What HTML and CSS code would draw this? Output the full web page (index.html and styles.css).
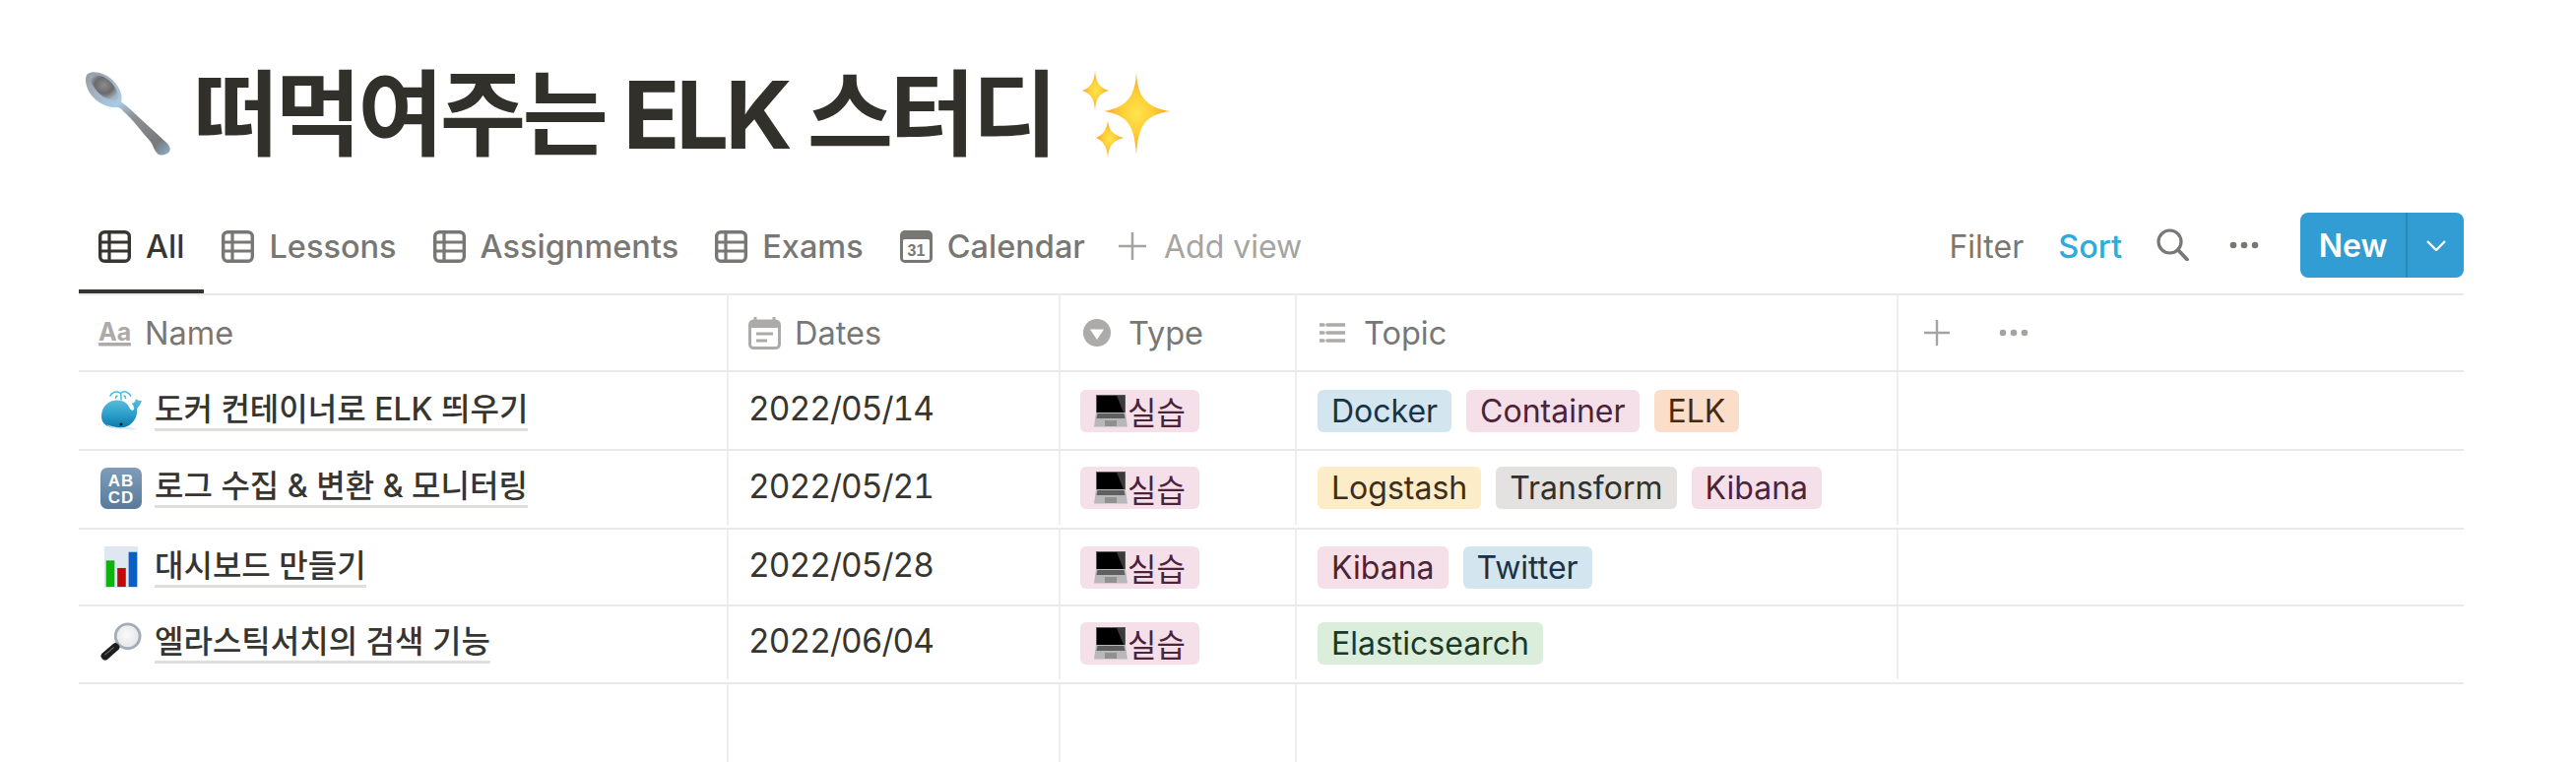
FILE: index.html
```html
<!DOCTYPE html>
<html lang="ko">
<head>
<meta charset="utf-8">
<title>떠먹여주는 ELK 스터디</title>
<link rel="stylesheet" href="styles.css">
</head>
<body>
<svg class="defs" width="0" height="0" aria-hidden="true">
  <defs>
    <linearGradient id="gSpoon" x1="0" y1="0" x2="1" y2="1">
      <stop offset="0" stop-color="#9a9a9c"/><stop offset=".38" stop-color="#a9cbe6"/><stop offset=".55" stop-color="#8e9094"/><stop offset=".85" stop-color="#77797d"/><stop offset="1" stop-color="#8fb3d2"/>
    </linearGradient>
    <radialGradient id="gBowl" cx=".5" cy=".42" r=".6">
      <stop offset="0" stop-color="#8c8c8e"/><stop offset=".55" stop-color="#6a6a6d"/><stop offset="1" stop-color="#a8b6c4"/>
    </radialGradient>
    <radialGradient id="gStar" cx=".5" cy=".5" r=".5">
      <stop offset="0" stop-color="#ffe44f"/><stop offset=".45" stop-color="#ffcf36"/><stop offset="1" stop-color="#ff9f2a"/>
    </radialGradient>
    <linearGradient id="gWhale" x1="0" y1="0" x2="0" y2="1">
      <stop offset="0" stop-color="#5cc0da"/><stop offset=".55" stop-color="#2b9dc8"/><stop offset="1" stop-color="#0a79ad"/>
    </linearGradient>
    <linearGradient id="gAbcd" x1="0" y1="0" x2="0" y2="1">
      <stop offset="0" stop-color="#7f9dba"/><stop offset="1" stop-color="#587a9a"/>
    </linearGradient>
    <radialGradient id="gLens" cx=".45" cy=".45" r=".6">
      <stop offset="0" stop-color="#fafafa"/><stop offset="1" stop-color="#e4e4e4"/>
    </radialGradient>
    <symbol id="i-table" viewBox="0 0 33 33">
      <rect x="1.700" y="1.700" width="29.600" height="29.600" rx="4.500" fill="none" stroke="currentColor" stroke-width="3.400"/>
      <path d="M1.500 12h30M1.500 21h30M11 1.500v30" fill="none" stroke="currentColor" stroke-width="3.200"/>
    </symbol>
    <symbol id="i-spoon" viewBox="0 0 90 90">
      <path d="M4 4C10 0 22 3 30 11c7 7 10 16 8 21 1 2 4 3 6 5 13 12 26 24 38 35 5 4 7 8 5 11-3 4-10 5-13 1-3-3-3-7-6-11C58 62 50 50 40 42c-2-3-4-4-6-4-8 1-20-4-26-12C2 18 0 8 4 4z" fill="url(#gSpoon)"/>
      <path d="M7 6c6-3 16 1 22 8 5 6 7 12 5 16-5 2-14-1-20-8C9 16 5 10 7 6z" fill="url(#gBowl)"/>
    </symbol>
    <symbol id="i-spark" viewBox="0 0 92 88">
      <path d="M57 1c1 24 9 36 34 40-25 4-32 14-34 44-2-30-9-40-33-44 24-4 32-16 33-40z" fill="url(#gStar)"/>
      <path d="M15 0c.8 11 4 17 14 20-10 3-13 8-14 20-1-12-4-17-13-20 9-3 12-9 13-20z" fill="url(#gStar)"/>
      <path d="M28 50c.8 10 5 15 16 18-11 3-15 8-16 20-1-12-5-17-12-20 7-3 11-8 12-18z" fill="url(#gStar)"/>
    </symbol>
    <symbol id="i-whale" viewBox="0 0 42 42">
      <path d="M21 10c0-3 0-5-.5-6.500M20.500 3.500C18.500 1.500 15 1.500 13 3M20.500 3.500c2-2 5-2 7-.5M13 3c-1.500.5-2.500 1.500-3 3M27.500 3c1.500.5 2.500 1.500 3 3M17 6c-1 .5-1.500 1.500-1.500 2.500M24 6c1 .5 1.500 1.500 1.500 2.500" fill="none" stroke="#3dc1da" stroke-width="1.500" stroke-linecap="round"/>
      <path d="M1 27C1 16 9 10.500 17 10.500c7 0 11 4 13 8.500 1 2 3 2 4 1 .5-2-.5-4-2-6 1-.3 3-1 4-5 1 1.500 3 2 6 2-1 3-3 6-5 8 .5 5-.5 10-4 13.500C29 37 24 39 18 39 8 39 1 35 1 27z" fill="url(#gWhale)"/>
      <path d="M6 35c6 3 14 4 21 2.500 3 1 7 1 10 2.500-4 .8-8 .6-12-.5-7 1.500-14 0-19-4.500z" fill="#d7ecf4"/>
      <circle cx="21" cy="35" r="1.500" fill="#111"/>
    </symbol>
    <symbol id="i-chart" viewBox="0 0 42 44">
      <rect x="3" width="36" height="44" fill="#dfe8f0"/>
      <rect x="5" y="15" width="9" height="28" fill="#0cb40c"/>
      <rect x="17" y="23" width="9" height="20" fill="#c00a0a"/>
      <rect x="29" y="6" width="9" height="37" fill="#0a5fc6"/>
    </symbol>
    <symbol id="i-mag" viewBox="0 0 44 44">
      <circle cx="29" cy="15" r="13" fill="url(#gLens)" stroke="#a4aeb8" stroke-width="3"/>
      <path d="M16 26.500 5 36" stroke="#1d1d1d" stroke-width="8.500" stroke-linecap="round"/>
      <path d="M14 27 5 34.500" stroke="#666" stroke-width="1.200" stroke-linecap="round"/>
    </symbol>
    <symbol id="i-laptop" viewBox="0 0 34 33">
      <path d="M2 0H32V18H2z" fill="#5a5a5a"/>
      <path d="M3 1H31V18H3z" fill="#000"/>
      <path d="M23 1h8v17h-1z" fill="#3a3a3a"/>
      <path d="M2 18h30l2 14.500H0z" fill="#b8b8b8"/>
      <path d="M3.500 19h27l1 5H2.500z" fill="#5f5f5f"/>
      <rect x="11" y="26" width="12" height="6" fill="#909090"/>
    </symbol>
  </defs>
</svg>

<main class="page">
  <h1 class="title">
    <svg class="title-icon"><use href="#i-spoon"/></svg>
    <span>떠먹여주는 ELK 스터디</span>
    <svg class="title-spark"><use href="#i-spark"/></svg>
  </h1>

  <nav class="toolbar">
    <div class="tabs">
      <a class="tab active"><svg class="ico"><use href="#i-table"/></svg>All</a>
      <a class="tab"><svg class="ico"><use href="#i-table"/></svg>Lessons</a>
      <a class="tab"><svg class="ico"><use href="#i-table"/></svg>Assignments</a>
      <a class="tab"><svg class="ico"><use href="#i-table"/></svg>Exams</a>
      <a class="tab"><svg class="ico" viewBox="0 0 33 33"><path d="M5 0h23a5 5 0 0 1 5 5v23a5 5 0 0 1-5 5H5a5 5 0 0 1-5-5V5a5 5 0 0 1 5-5z" fill="currentColor"/><rect x="3" y="9" width="27" height="21" rx="1.500" fill="#fff"/><text x="16.500" y="26" class="cal-num">31</text></svg>Calendar</a>
      <a class="tab add"><svg class="ico plus" viewBox="0 0 28 28"><path d="M14 0v28M0 14h28" stroke="currentColor" stroke-width="2.500"/></svg>Add view</a>
    </div>
    <div class="actions">
      <span class="act">Filter</span>
      <span class="act sort">Sort</span>
      <svg class="search" viewBox="0 0 33 33"><circle cx="13.500" cy="13.500" r="11.500" fill="none" stroke="currentColor" stroke-width="3.200"/><path d="M22 22l9 9.500" stroke="currentColor" stroke-width="3.800" stroke-linecap="round"/></svg>
      <svg class="dots" viewBox="0 0 30 8"><circle cx="4" cy="4" r="3.300"/><circle cx="15" cy="4" r="3.300"/><circle cx="26" cy="4" r="3.300"/></svg>
      <div class="new">
        <span class="new-label">New</span>
        <span class="new-arrow"><svg viewBox="0 0 20 11"><path d="M1 1l9 9 9-9" fill="none" stroke="#fff" stroke-width="2.400"/></svg></span>
      </div>
    </div>
  </nav>

  <section class="table">
    <div class="row head">
      <div class="cell"><svg class="ico" viewBox="0 0 33 26"><text x="0" y="20" class="aa">Aa</text><rect y="22.500" width="33" height="3.500" rx="1" fill="currentColor"/></svg>Name</div>
      <div class="cell"><svg class="ico" viewBox="0 0 33 33"><rect x="1.500" y="4" width="30" height="27.500" rx="4" fill="none" stroke="currentColor" stroke-width="3"/><path d="M1.500 8h30" stroke="currentColor" stroke-width="6"/><path d="M7 0v5M26 0v5M8 17h17M8 24h11" stroke="currentColor" stroke-width="3"/></svg>Dates</div>
      <div class="cell"><svg class="ico round" viewBox="0 0 28 28"><circle cx="14" cy="14" r="14" fill="currentColor"/><path d="M7 10.500h14L14 21z" fill="#fff"/></svg>Type</div>
      <div class="cell"><svg class="ico list" viewBox="0 0 26 22"><path d="M0 3h4M8 3h18M0 11h4M8 11h18M0 19h4M8 19h18" stroke="currentColor" stroke-width="3.600" stroke-linecap="round"/></svg>Topic</div>
      <div class="cell last">
        <svg class="hplus" viewBox="0 0 26 26"><path d="M13 0v26M0 13h26" stroke="currentColor" stroke-width="2.400"/></svg>
        <svg class="dots hdots" viewBox="0 0 30 8"><circle cx="4" cy="4" r="3.300"/><circle cx="15" cy="4" r="3.300"/><circle cx="26" cy="4" r="3.300"/></svg>
      </div>
    </div>

    <div class="row">
      <div class="cell name"><svg class="emoji"><use href="#i-whale"/></svg><span class="link">도커 컨테이너로 ELK 띄우기</span></div>
      <div class="cell date">2022/05/14</div>
      <div class="cell"><span class="pill pink"><svg class="laptop"><use href="#i-laptop"/></svg>실습</span></div>
      <div class="cell tags"><span class="pill blue">Docker</span><span class="pill pink">Container</span><span class="pill orange">ELK</span></div>
      <div class="cell last"></div>
    </div>

    <div class="row gap">
      <div class="cell name"><svg class="emoji abcd" viewBox="0 0 42 42"><rect width="42" height="42" rx="7" fill="url(#gAbcd)"/><text x="21" y="19" class="abcd-t">AB</text><text x="21" y="36" class="abcd-t">CD</text></svg><span class="link">로그 수집 &amp; 변환 &amp; 모니터링</span></div>
      <div class="cell date">2022/05/21</div>
      <div class="cell"><span class="pill pink"><svg class="laptop"><use href="#i-laptop"/></svg>실습</span></div>
      <div class="cell tags"><span class="pill yellow">Logstash</span><span class="pill gray">Transform</span><span class="pill pink">Kibana</span></div>
      <div class="cell last"></div>
    </div>

    <div class="row">
      <div class="cell name"><svg class="emoji"><use href="#i-chart"/></svg><span class="link">대시보드 만들기</span></div>
      <div class="cell date">2022/05/28</div>
      <div class="cell"><span class="pill pink"><svg class="laptop"><use href="#i-laptop"/></svg>실습</span></div>
      <div class="cell tags"><span class="pill pink">Kibana</span><span class="pill blue">Twitter</span></div>
      <div class="cell last"></div>
    </div>

    <div class="row gap">
      <div class="cell name"><svg class="emoji"><use href="#i-mag"/></svg><span class="link">엘라스틱서치의 검색 기능</span></div>
      <div class="cell date">2022/06/04</div>
      <div class="cell"><span class="pill pink"><svg class="laptop"><use href="#i-laptop"/></svg>실습</span></div>
      <div class="cell tags"><span class="pill green">Elasticsearch</span></div>
      <div class="cell last"></div>
    </div>

    <div class="row filler">
      <div class="cell"></div><div class="cell"></div><div class="cell"></div><div class="cell last"></div>
    </div>
  </section>
</main>
</body>
</html>
```
FILE: styles.css
```css
* { box-sizing: border-box; }
html, body { margin: 0; padding: 0; background: #fff; }
body {
  font-family: Inter, "Noto Sans CJK KR", sans-serif;
  color: #37352f;
  height: 774px;
  overflow: hidden;
}
.defs { position: absolute; }
.page { width: 2422px; margin-left: 80px; }

.title {
  display: flex;
  align-items: center;
  height: 216px;
  margin: 0;
  padding: 16px 0 0 5px;
  font-size: 95px;
  font-weight: 700;
  line-height: 1;
  color: #32302a;
  letter-spacing: -3.800px;
}
.title-icon { width: 90px; height: 90px; margin-right: 21px; flex: none; }
.title-spark { width: 92px; height: 88px; margin-left: 26px; flex: none; }

.toolbar {
  display: flex;
  justify-content: space-between;
  height: 84px;
  border-bottom: 2px solid #e9e9e7;
}
.tabs { display: flex; }
.tab {
  display: flex;
  align-items: center;
  gap: 15px;
  height: 82px;
  padding: 0 19px 10px 18px;
  border-bottom: 4px solid transparent;
  font-size: 32.500px;
  font-weight: 500;
  color: #787774;
  white-space: nowrap;
}
.tab.active { padding: 0 20px 10px; color: #37352f; border-bottom-color: #37352f; }
.tab.add { margin-left: -3px; color: #a5a4a1; font-weight: 400; font-size: 32px; gap: 18px; }
.ico { width: 33px; height: 33px; flex: none; }
.plus { width: 28px; height: 28px; }
.cal-num { font: 700 16px "Liberation Sans", sans-serif; text-anchor: middle; fill: currentColor; }

.actions { display: flex; align-items: flex-start; height: 82px; }
.act { font-size: 32px; line-height: 40px; color: #787774; margin-top: 15px; margin-right: 35px; }
.act.sort { color: #2eaadc; font-weight: 500; font-size: 32.500px; }
.search { width: 33px; height: 33px; margin-top: 16px; color: #787774; margin-right: 41px; flex: none; }
.dots { width: 30px; height: 8px; fill: #787774; flex: none; }
.actions .dots { margin-top: 29px; margin-right: 42px; }
.new {
  display: flex;
  width: 166px;
  height: 66px;
  border-radius: 8px;
  background: #319dd3;
  color: #fff;
  font-size: 32px;
  font-weight: 600;
}
.new-label { width: 109px; display: flex; align-items: center; justify-content: center; border-right: 2px solid #2a86b6; }
.new-arrow { flex: 1; display: flex; align-items: center; justify-content: center; }
.new-arrow svg { width: 20px; height: 11px; }

.table { display: grid; grid-template-rows: 78px 80px 80px 78px 79px 80px; }
.row {
  display: grid;
  grid-template-columns: 660px 337px 240px 611px 1fr;
  border-bottom: 2px solid #e9e9e7;
}
.row.filler { grid-template-columns: 660px 337px 240px 611px; border-bottom: 0; }
.gap .cell { margin-bottom: 3px; }
.cell {
  display: flex;
  align-items: center;
  min-width: 0;
  padding: 0 20px;
  border-right: 2px solid #eeeeec;
  font-size: 32px;
  white-space: nowrap;
}
.cell.last { border-right: 0; padding-left: 26px; }
.head .cell { color: #787774; gap: 14px; font-size: 32.500px; }
.head .ico { color: #acaba9; }
.head .round { width: 28px; height: 28px; margin-right: 4px; margin-left: 3px; }
.head .list { width: 26px; height: 22px; margin-left: 3px; margin-right: 5px; }
.aa { font: 700 25px Inter, sans-serif; fill: currentColor; }
.hplus { width: 26px; height: 26px; color: #a5a4a1; flex: none; }
.head .hdots { margin-left: 36px; fill: #a5a4a1; }

.name { padding-left: 22px; gap: 13px; font-weight: 500; }
.emoji { width: 42px; height: 42px; flex: none; }
.link { border-bottom: 3px solid #dededc; line-height: 38px; }
.date { padding-bottom: 4px; font-size: 33.500px; font-variant-numeric: tabular-nums; letter-spacing: -1px; }
.pill {
  display: inline-flex;
  align-items: center;
  height: 43px;
  padding: 0 14px;
  border-radius: 6px;
  font-size: 32px;
}
.tags { gap: 15px; padding-left: 21px; }
.laptop { width: 34px; height: 33px; flex: none; }
.abcd-t { font: 700 17px "Liberation Sans", sans-serif; text-anchor: middle; fill: #fff; letter-spacing: 1px; }
.pink { background: #f5e0e9; color: #4c2337; }
.blue { background: #d3e5ef; color: #183347; }
.orange { background: #fadec9; color: #49290e; }
.yellow { background: #fdecc8; color: #402c1b; }
.gray { background: #e3e2e0; color: #32302c; }
.green { background: #dbeddb; color: #1c3829; }
```
